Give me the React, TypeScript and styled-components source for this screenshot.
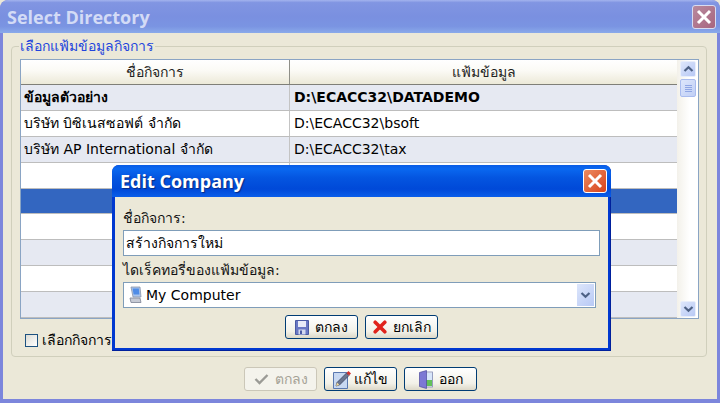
import React from "react";
import styled, {createGlobalStyle} from "styled-components";

const uiFont = `"DejaVu Sans", "Noto Sans", "Liberation Sans", sans-serif`;
const titleFont = `"Open Sans", "DejaVu Sans", sans-serif`;

const rows = [
    {name: "ข้อมูลตัวอย่าง", path: "D:\\ECACC32\\DATADEMO", bold: true},
    {name: "บริษัท บิซิเนสซอฟต์ จำกัด", path: "D:\\ECACC32\\bsoft"},
    {name: "บริษัท AP International จำกัด", path: "D:\\ECACC32\\tax"},
    {name: "", path: ""},
    {name: "", path: "", selected: true},
    {name: "", path: ""},
    {name: "", path: ""},
    {name: "", path: ""},
    {name: "", path: ""},
];

const ChevronUp = () => (
    <svg width="11" height="8" viewBox="0 0 11 8">
        <path d="M1.5 6 L5.5 2.2 L9.5 6" fill="none" stroke="#4d6185" strokeWidth="2.2"/>
    </svg>
);

const ChevronDown = () => (
    <svg width="11" height="8" viewBox="0 0 11 8">
        <path d="M1.5 2 L5.5 5.8 L9.5 2" fill="none" stroke="#4d6185" strokeWidth="2.2"/>
    </svg>
);

const CloseGlyph = () => (
    <svg width="16" height="16" viewBox="0 0 16 16">
        <path d="M2 2 L14 14 M14 2 L2 14" stroke="#fff" strokeWidth="3"/>
    </svg>
);

const SaveIcon = () => (
    <svg width="14" height="15" viewBox="0 0 14 15">
        <path d="M0.5 0.5 H13.5 V14.5 H0.5 Z" fill="#6a78c4" stroke="#4a5aa4"/>
        <rect x="3" y="1" width="8" height="6" fill="#e8ebf8"/>
        <rect x="3.5" y="9.5" width="7" height="5" fill="#d4d9ef"/>
        <rect x="5" y="10.5" width="2" height="3.5" fill="#4a5aa4"/>
    </svg>
);

const CancelIcon = () => (
    <svg width="14" height="14" viewBox="0 0 14 14">
        <path d="M2.2 2.2 L11.8 11.8 M11.8 2.2 L2.2 11.8" stroke="#e0231c" strokeWidth="3.6" strokeLinecap="round"/>
    </svg>
);

const CheckIcon = () => (
    <svg width="15" height="12" viewBox="0 0 15 12">
        <path d="M1.5 6 L5.5 10 L13.5 2" fill="none" stroke="#9b9b96" strokeWidth="2.4"/>
    </svg>
);

const EditIcon = () => (
    <svg width="18" height="19" viewBox="0 0 18 19">
        <path d="M0.5 2.5 H14.5 V18.5 H0.5 Z" fill="#c8d8f2" stroke="#5a78b0"/>
        <path d="M3 16 L4 12.5 L13.5 3 L16 5.5 L6.5 15 Z" fill="#6b7690" stroke="#2e3a58" strokeWidth="0.7"/>
        <path d="M3 16 L4 12.5 L6.5 15 Z" fill="#efd9a0"/>
        <path d="M13.5 3 L15.5 1 L18 3.5 L16 5.5 Z" fill="#d2302c"/>
    </svg>
);

const DoorIcon = () => (
    <svg width="14" height="19" viewBox="0 0 14 19">
        <rect x="5" y="2" width="8.5" height="15" fill="#f4f4f4" stroke="#7e88b4" strokeWidth="0.8"/>
        <rect x="7" y="3" width="6" height="7" fill="#d8e6fa"/>
        <rect x="7" y="10" width="6" height="6" fill="#63c05a"/>
        <path d="M0.5 2.5 L7.5 0.5 V18.5 L0.5 16.5 Z" fill="#7c78d4" stroke="#4e4a9c" strokeWidth="0.7"/>
    </svg>
);

const ComputerIcon = () => (
    <svg width="13" height="18" viewBox="0 0 13 18">
        <path d="M2 1 H11 L12 11 H4 Z" fill="#a9c4ec" stroke="#8c95a8" strokeWidth="0.8"/>
        <path d="M3.6 2.5 H9.8 L10.4 8.5 H4.6 Z" fill="#4f8ce6"/>
        <path d="M1 12 H11 L12 16.5 H2 Z" fill="#c6cad4" stroke="#7c8394" strokeWidth="0.8"/>
    </svg>
);

const App: React.FC = () => {
    return (
        <Window>
            <GlobalStyle/>
            <TitleBar>
                <TitleText>Select Directory</TitleText>
                <FadedClose><CloseGlyph/></FadedClose>
            </TitleBar>
            <Body>
                <Group>
                    <GroupLabel>เลือกแฟ้มข้อมูลกิจการ</GroupLabel>
                    <GridFrame>
                        <GridTable>
                            <HeaderRow>
                                <HeaderCell>ชื่อกิจการ</HeaderCell>
                                <HeaderCell>แฟ้มข้อมูล</HeaderCell>
                            </HeaderRow>
                            {rows.map((row, i) => (
                                <Row key={i} $odd={i % 2 === 0} $bold={row.bold} $selected={row.selected}>
                                    <Cell>{row.name}</Cell>
                                    <Cell>{row.path}</Cell>
                                </Row>
                            ))}
                        </GridTable>
                        <ScrollBar>
                            <ScrollButton><ChevronUp/></ScrollButton>
                            <ScrollThumb>
                                <GripLine/>
                                <GripLine/>
                                <GripLine/>
                                <GripLine/>
                            </ScrollThumb>
                            <ScrollSpace/>
                            <ScrollButton><ChevronDown/></ScrollButton>
                        </ScrollBar>
                    </GridFrame>
                    <CheckRow>
                        <CheckBox/>
                        <span>เลือกกิจการ</span>
                    </CheckRow>
                </Group>
                <ButtonBar>
                    <Button disabled><CheckIcon/>ตกลง</Button>
                    <Button $gap={3}><EditIcon/>แก้ไข</Button>
                    <Button><DoorIcon/>ออก</Button>
                </ButtonBar>
            </Body>

            <Dialog>
                <DialogTitleBar>
                    <DialogTitle>Edit Company</DialogTitle>
                    <DialogClose><CloseGlyph/></DialogClose>
                </DialogTitleBar>
                <DialogBody>
                    <FieldLabel>ชื่อกิจการ:</FieldLabel>
                    <TextField>สร้างกิจการใหม่</TextField>
                    <FieldLabel>ไดเร็คทอรี่ของแฟ้มข้อมูล:</FieldLabel>
                    <ComboField>
                        <ComputerIcon/>
                        <ComboText>My Computer</ComboText>
                        <ComboButton><ChevronDown/></ComboButton>
                    </ComboField>
                    <DialogButtons>
                        <Button><SaveIcon/>ตกลง</Button>
                        <Button><CancelIcon/>ยกเลิก</Button>
                    </DialogButtons>
                </DialogBody>
            </Dialog>
        </Window>
    )
}

export default App

const GlobalStyle = createGlobalStyle`
  html, body {
    margin: 0;
    padding: 0;
    background: #ebe8d8;
  }
  * {
    box-sizing: border-box;
  }
`

const Window = styled.div`
  position: relative;
  width: 720px;
  height: 403px;
  overflow: hidden;
  display: flex;
  flex-direction: column;
  background: #7c86dc;
  padding: 0 3px 4px 3px;
  border-radius: 8px 8px 0 0;
  font-family: ${uiFont};
  font-size: 14px;
  color: #000;
`

const TitleBar = styled.div`
  height: 33px;
  margin: 0 -3px;
  padding: 0 4px 0 7px;
  display: flex;
  align-items: center;
  justify-content: space-between;
  border-radius: 8px 8px 0 0;
  background: linear-gradient(to bottom, #a3b3ee 0, #8195e2 8%, #7a90e0 50%, #7a94e2 80%, #8aaaea 100%);
`

const TitleText = styled.div`
  font-family: ${titleFont};
  font-size: 18px;
  font-weight: 700;
  color: #d3dbf6;
`

const FadedClose = styled.div`
  width: 24px;
  height: 24px;
  display: flex;
  align-items: center;
  justify-content: center;
  border: 1px solid #d8dcf0;
  border-radius: 3px;
  background: linear-gradient(135deg, #b88a9e, #a8657f);
`

const Body = styled.div`
  flex: 1;
  display: flex;
  flex-direction: column;
  background: #ebe8d8;
  padding: 13px 10px 8px 8px;
`

const Group = styled.div`
  position: relative;
  height: 311px;
  border: 1px solid #d0cfbc;
  border-radius: 4px;
  padding: 12px 7px 0 8px;
`

const GroupLabel = styled.div`
  position: absolute;
  top: -9px;
  left: 7px;
  padding: 0 1px;
  line-height: 16px;
  background: #ebe8d8;
  color: #2244dd;
`

const GridFrame = styled.div`
  display: flex;
  height: 260px;
  border: 1px solid #8aa4c4;
  background: #fff;
`

const GridTable = styled.div`
  flex: 1;
  display: flex;
  flex-direction: column;
`

const HeaderRow = styled.div`
  height: 25px;
  display: grid;
  grid-template-columns: 268px 1fr;
  border-bottom: 1px solid #7f7f78;
  background: linear-gradient(to bottom, #ffffff 0, #fbfaf5 45%, #ece9d8 100%);
`

const HeaderCell = styled.div`
  display: flex;
  align-items: center;
  justify-content: center;
  color: #222;
  & + & {
    border-left: 1px solid #8f8f88;
  }
`

const Row = styled.div<{$odd: boolean; $bold?: boolean; $selected?: boolean}>`
  height: 26px;
  display: grid;
  grid-template-columns: 268px 1fr;
  border-bottom: 1px solid #bdbdbd;
  background: ${p => p.$selected ? "#3366c0" : p.$odd ? "#e6e9f2" : "#fff"};
  font-weight: ${p => p.$bold ? 700 : 400};
`

const Cell = styled.div`
  display: flex;
  align-items: center;
  padding-left: 3px;
  white-space: nowrap;
  overflow: hidden;
  & + & {
    border-left: 1px solid #c4c4c4;
    padding-left: 4px;
  }
`

const ScrollBar = styled.div`
  width: 21px;
  flex: none;
  display: flex;
  flex-direction: column;
  gap: 2px;
  padding: 1px 2px 1px 3px;
  background: linear-gradient(to right, #f3f1ea, #ffffff 60%);
`

const ScrollButton = styled.div`
  width: 16px;
  height: 16px;
  display: flex;
  align-items: center;
  justify-content: center;
  border: 1px solid #e8eefb;
  border-radius: 2px;
  background: linear-gradient(135deg, #dde6fb, #b8c9f5);
`

const ScrollThumb = styled.div`
  width: 16px;
  height: 18px;
  display: flex;
  flex-direction: column;
  align-items: center;
  justify-content: center;
  gap: 1px;
  border: 1px solid #a9bcef;
  border-radius: 2px;
  background: linear-gradient(135deg, #dde6fb, #c0cff6);
`

const GripLine = styled.div`
  width: 7px;
  height: 1px;
  background: #8fa6e4;
`

const ScrollSpace = styled.div`
  flex: 1;
`

const CheckRow = styled.div`
  display: flex;
  align-items: center;
  gap: 4px;
  margin-top: 13px;
  padding-left: 5px;
  height: 16px;
`

const CheckBox = styled.div`
  width: 13px;
  height: 13px;
  border: 1px solid #1c5180;
  background: linear-gradient(135deg, #dcdcd5, #ffffff);
`

const ButtonBar = styled.div`
  display: flex;
  justify-content: center;
  gap: 7px;
  margin-top: 10px;
  padding-left: 3px;
`

const Button = styled.button<{$gap?: number}>`
  width: 73px;
  height: 24px;
  padding: 0;
  display: flex;
  align-items: center;
  justify-content: center;
  gap: ${p => p.$gap ?? 6}px;
  border: 1px solid #003c74;
  border-radius: 3px;
  background: linear-gradient(to bottom, #ffffff, #f2f1e8 70%, #dcd8c8);
  font-family: ${uiFont};
  font-size: 14px;
  color: #000;

  &:disabled {
    border-color: #cbc7b8;
    background: #f4f3ec;
    color: #a5a296;
  }
`

const Dialog = styled.div`
  position: absolute;
  left: 112px;
  top: 165px;
  width: 499px;
  height: 186px;
  display: flex;
  flex-direction: column;
  background: #0038d0;
  border-radius: 7px 7px 0 0;
  padding: 0 3px 3px 3px;
  box-shadow: inset -1px -1px 0 #00209c;
`

const DialogTitleBar = styled.div`
  height: 32px;
  margin: 0 -3px;
  padding: 0 4px 0 8px;
  flex: none;
  display: flex;
  align-items: center;
  justify-content: space-between;
  border-radius: 7px 7px 0 0;
  background: linear-gradient(to bottom, #0a5ce6 0, #0a68f0 12%, #0455e0 40%, #0049d8 75%, #0a5eea 100%);
`

const DialogTitle = styled.div`
  font-family: ${titleFont};
  font-size: 18px;
  font-weight: 700;
  color: #fff;
  text-shadow: 1px 1px 1px #0a2a80;
`

const DialogClose = styled.div`
  width: 24px;
  height: 24px;
  display: flex;
  align-items: center;
  justify-content: center;
  border: 1px solid #fff;
  border-radius: 3px;
  background: linear-gradient(135deg, #ec8a60, #d8431c);
`

const DialogBody = styled.div`
  flex: 1;
  display: flex;
  flex-direction: column;
  background: #ebe8d8;
  padding: 12px 8px 0 8px;
`

const FieldLabel = styled.div`
  height: 21px;
  line-height: 18px;
  color: #111;
`

const TextField = styled.div`
  height: 26px;
  margin-bottom: 5px;
  padding-left: 2px;
  display: flex;
  align-items: center;
  border: 1px solid #7f9db9;
  background: #fff;
`

const ComboField = styled.div`
  width: 473px;
  height: 26px;
  padding: 0 1px 0 5px;
  display: flex;
  align-items: center;
  gap: 4px;
  border: 1px solid #7f9db9;
  background: #fff;
`

const ComboText = styled.div`
  flex: 1;
`

const ComboButton = styled.div`
  width: 17px;
  height: 22px;
  display: flex;
  align-items: center;
  justify-content: center;
  background: linear-gradient(135deg, #dde6fb, #b8c9f5);
`

const DialogButtons = styled.div`
  display: flex;
  justify-content: center;
  gap: 7px;
  margin-top: 7px;
`
